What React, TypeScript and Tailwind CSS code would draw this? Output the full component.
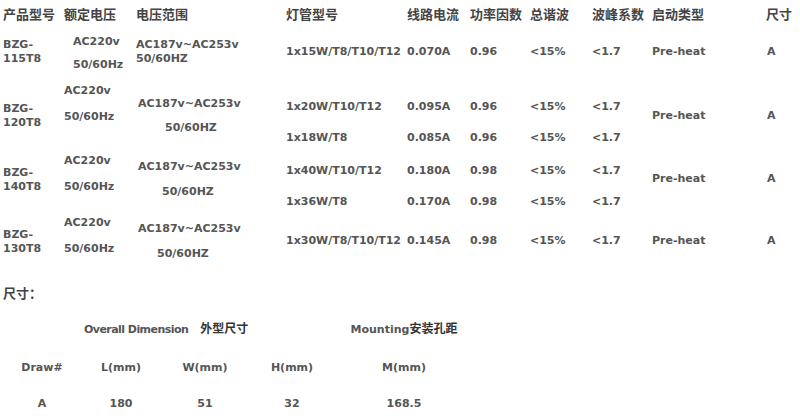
const latin = "font-['DejaVu_Sans',sans-serif] font-bold text-[11px] leading-[14px] text-[#555]";
const cjk = "font-['Noto_Sans_CJK_SC',sans-serif] font-bold text-[13px] leading-[14px] text-[#444]";

const headers = ['产品型号', '额定电压', '电压范围', '灯管型号', '线路电流', '功率因数', '总谐波', '波峰系数', '启动类型', '尺寸'];
const widths = [62, 72, 150, 121, 63, 60, 62, 60, 114, 36];

type Lamp = { type: string; current: string; pf: string; thd: string; crest: string };

type Group = {
  model: string;
  h: string;
  modelPt: string;
  volt: { pl: string; pt: string; gap: string };
  range: { pt: string; gap: string; pl2: string; inline?: boolean };
  lampPt: string;
  lampGap: string;
  startPt: string;
  lamps: Lamp[];
};

const groups: Group[] = [
  {
    model: '115T8',
    h: 'h-[52px]',
    modelPt: 'pt-[10px]',
    volt: { pl: 'pl-[11px]', pt: 'pt-[7px]', gap: 'mt-[9px]' },
    range: { pt: 'pt-[10px]', gap: 'mt-0', pl2: 'pl-[2px]', inline: true },
    lampPt: 'pt-[17px]',
    lampGap: 'mt-0',
    startPt: 'pt-[17px]',
    lamps: [{ type: '1x15W/T8/T10/T12', current: '0.070A', pf: '0.96', thd: '<15%', crest: '<1.7' }],
  },
  {
    model: '120T8',
    h: 'h-[68px]',
    modelPt: 'pt-[22px]',
    volt: { pl: 'pl-[2px]', pt: 'pt-[4px]', gap: 'mt-[12px]' },
    range: { pt: 'pt-[17px]', gap: 'mt-[10px]', pl2: 'pl-[29px]' },
    lampPt: 'pt-[20px]',
    lampGap: 'mt-[17px]',
    startPt: 'pt-[29px]',
    lamps: [
      { type: '1x20W/T10/T12', current: '0.095A', pf: '0.96', thd: '<15%', crest: '<1.7' },
      { type: '1x18W/T8', current: '0.085A', pf: '0.96', thd: '<15%', crest: '<1.7' },
    ],
  },
  {
    model: '140T8',
    h: 'h-[64px]',
    modelPt: 'pt-[18px]',
    volt: { pl: 'pl-[2px]', pt: 'pt-[6px]', gap: 'mt-[12px]' },
    range: { pt: 'pt-[12px]', gap: 'mt-[11px]', pl2: 'pl-[26px]' },
    lampPt: 'pt-[16px]',
    lampGap: 'mt-[17px]',
    startPt: 'pt-[24px]',
    lamps: [
      { type: '1x40W/T10/T12', current: '0.180A', pf: '0.98', thd: '<15%', crest: '<1.7' },
      { type: '1x36W/T8', current: '0.170A', pf: '0.98', thd: '<15%', crest: '<1.7' },
    ],
  },
  {
    model: '130T8',
    h: 'h-[56px]',
    modelPt: 'pt-[16px]',
    volt: { pl: 'pl-[2px]', pt: 'pt-[4px]', gap: 'mt-[12px]' },
    range: { pt: 'pt-[10px]', gap: 'mt-[11px]', pl2: 'pl-[21px]' },
    lampPt: 'pt-[22px]',
    lampGap: 'mt-0',
    startPt: 'pt-[22px]',
    lamps: [{ type: '1x30W/T8/T10/T12', current: '0.145A', pf: '0.98', thd: '<15%', crest: '<1.7' }],
  },
];

function Stack({ items, pt, gap }: { items: string[]; pt: string; gap: string }) {
  return (
    <div className={`${pt} pl-[2px] whitespace-nowrap`}>
      {items.map((t, i) => (
        <div key={i} className={i > 0 ? gap : ''}>
          {t}
        </div>
      ))}
    </div>
  );
}

function ProductTable() {
  return (
    <table className={`table-fixed border-collapse w-[800px] ${latin}`}>
      <colgroup>
        {widths.map((w, i) => (
          <col key={i} style={{ width: w }} />
        ))}
      </colgroup>
      <thead>
        <tr className="h-[28px]">
          {headers.map((h, i) => (
            <th key={h} className={`${cjk} text-left font-bold align-top pt-[7px] ${i === 0 ? 'pl-[3px]' : 'pl-[2px]'} whitespace-nowrap`}>
              {h}
            </th>
          ))}
        </tr>
      </thead>
      <tbody>
        {groups.map((g) => (
          <tr key={g.model} className={`${g.h} align-top`}>
            <td className={`${g.modelPt} pl-[3px]`}>
              <div>BZG-</div>
              <div>{g.model}</div>
            </td>
            <td className={`${g.volt.pt} ${g.volt.pl} whitespace-nowrap`}>
              <div>AC220v</div>
              <div className={g.volt.gap}>50/60Hz</div>
            </td>
            <td className={`${g.range.pt} pl-[2px] whitespace-nowrap`}>
              <div className={g.range.inline ? '' : 'pl-[2px]'}>AC187v~AC253v</div>
              <div className={`${g.range.gap} ${g.range.inline ? '' : g.range.pl2}`}>50/60HZ</div>
            </td>
            <td className="overflow-visible">
              <Stack items={g.lamps.map((l) => l.type)} pt={g.lampPt} gap={g.lampGap} />
            </td>
            <td>
              <Stack items={g.lamps.map((l) => l.current)} pt={g.lampPt} gap={g.lampGap} />
            </td>
            <td>
              <Stack items={g.lamps.map((l) => l.pf)} pt={g.lampPt} gap={g.lampGap} />
            </td>
            <td>
              <Stack items={g.lamps.map((l) => l.thd)} pt={g.lampPt} gap={g.lampGap} />
            </td>
            <td>
              <Stack items={g.lamps.map((l) => l.crest)} pt={g.lampPt} gap={g.lampGap} />
            </td>
            <td className={`${g.startPt} pl-[2px]`}>Pre-heat</td>
            <td className={`${g.startPt} pl-[3px]`}>A</td>
          </tr>
        ))}
      </tbody>
    </table>
  );
}

function DimensionTable() {
  const dark = "font-['Noto_Sans_CJK_SC',sans-serif] text-[#333] tracking-normal";
  return (
    <div className={latin}>
      <div className={`${cjk} pl-[3px] mt-[18px]`}>尺寸：</div>
      <div className="grid grid-cols-[84px_74px_94px_80px_144px] mt-[21px]">
        <div />
        <div className="col-span-3 whitespace-nowrap">
          <span className="tracking-[-0.55px]">Overall Dimension</span>
          <span className={`${dark} text-[12px] ml-[12px]`}>外型尺寸</span>
        </div>
        <div className="text-center whitespace-nowrap">
          Mounting<span className={`${dark} text-[12px]`}>安装孔距</span>
        </div>
      </div>
      <div className="grid grid-cols-[84px_74px_94px_80px_144px] mt-[24px] text-center">
        <div>Draw#</div>
        <div>L(mm)</div>
        <div>W(mm)</div>
        <div>H(mm)</div>
        <div>M(mm)</div>
      </div>
      <div className="grid grid-cols-[84px_74px_94px_80px_144px] mt-[22px] text-center">
        <div>A</div>
        <div>180</div>
        <div>51</div>
        <div>32</div>
        <div>168.5</div>
      </div>
    </div>
  );
}

export default function App() {
  return (
    <div className="w-[800px] h-[416px] bg-white overflow-hidden">
      <ProductTable />
      <DimensionTable />
    </div>
  );
}
